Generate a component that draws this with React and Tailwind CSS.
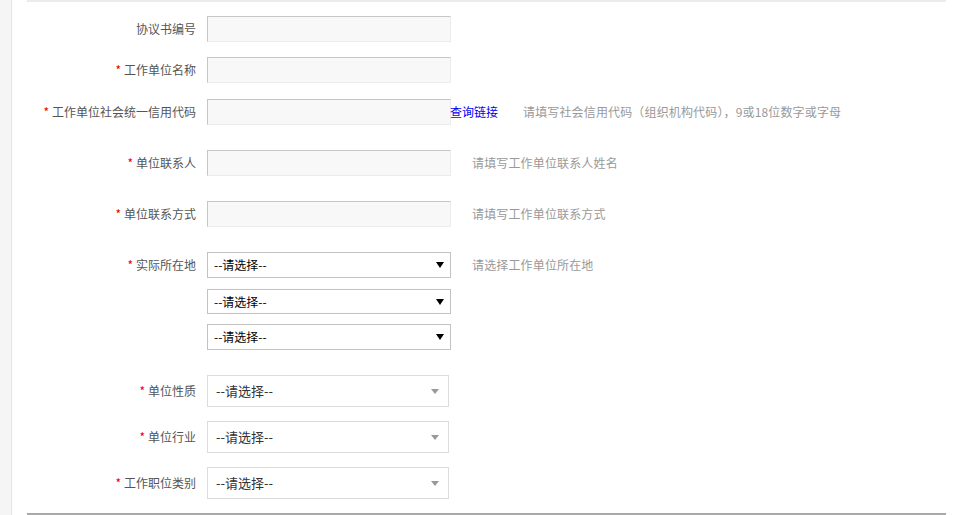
import React from "react";

const font = {
  fontFamily: '"Noto Sans CJK SC", "Noto Sans", sans-serif',
};

const Label = ({ text, required }) => (
  <div className="w-[169px] shrink-0 text-right text-[12px] text-[#555] leading-none">
    {required && <span className="text-[#e00] text-[12px] mr-[3px]">*</span>}
    {text}
  </div>
);

const TextBox = () => (
  <div className="w-[244px] h-[26px] shrink-0 bg-[#f8f8f8] border border-t-[#c6c6c6] border-l-[#c6c6c6] border-b-[#ebebeb] border-r-[#ebebeb]" />
);

// old-style native select with a black arrow
const NativeSelect = ({ h = "h-[26px]" }) => (
  <div className={`w-[244px] ${h} shrink-0 bg-white border border-[#c2c2c2] flex items-center justify-between pl-[6px] pr-[6px] text-[12px] text-black`}>
    <span>--请选择--</span>
    <span className="w-0 h-0 border-l-[4px] border-r-[4px] border-t-[6px] border-l-transparent border-r-transparent border-t-black" />
  </div>
);

// newer styled select with a grey arrow
const SoftSelect = () => (
  <div className="w-[242px] h-[32px] shrink-0 bg-white border border-[#dcdcdc] flex items-center justify-between pl-[8px] pr-[9px] text-[13px] text-[#333]">
    <span>--请选择--</span>
    <span className="w-0 h-0 border-l-[4px] border-r-[4px] border-t-[5px] border-l-transparent border-r-transparent border-t-[#999]" />
  </div>
);

const Hint = ({ children, className = "ml-[21px]" }) => (
  <span className={`${className} text-[12px] text-[#999] tracking-[0.15px]`}>{children}</span>
);

const Row = ({ mt, children }) => (
  <div className={`flex items-center ${mt}`}>{children}</div>
);

export default function App() {
  return (
    <div className="flex h-[515px] w-[958px] bg-white overflow-hidden" style={font}>
      <div className="w-[12px] bg-[#f5f5f5] border-r border-[#e4e4e4] shrink-0" />
      <div className="flex-1 pl-[15px] pr-[12px] flex flex-col">
        <div className="h-[2px] bg-[#ebebeb]" />

        <Row mt="mt-[14px]">
          <Label text="协议书编号" />
          <div className="ml-[11px]"><TextBox /></div>
        </Row>

        <Row mt="mt-[15px]">
          <Label text="工作单位名称" required />
          <div className="ml-[11px]"><TextBox /></div>
        </Row>

        <Row mt="mt-[16px]">
          <Label text="工作单位社会统一信用代码" required />
          <div className="ml-[11px]"><TextBox /></div>
          <a className="ml-[-1px] text-[12px] text-[#0000ee]">查询链接</a>
          <Hint className="ml-[25px]">请填写社会信用代码（组织机构代码），9或18位数字或字母</Hint>
        </Row>

        <Row mt="mt-[25px]">
          <Label text="单位联系人" required />
          <div className="ml-[11px]"><TextBox /></div>
          <Hint>请填写工作单位联系人姓名</Hint>
        </Row>

        <Row mt="mt-[25px]">
          <Label text="单位联系方式" required />
          <div className="ml-[11px]"><TextBox /></div>
          <Hint>请填写工作单位联系方式</Hint>
        </Row>

        <Row mt="mt-[25px]">
          <Label text="实际所在地" required />
          <div className="ml-[11px]"><NativeSelect /></div>
          <Hint>请选择工作单位所在地</Hint>
        </Row>
        <div className="mt-[11px] ml-[180px]"><NativeSelect h="h-[25px]" /></div>
        <div className="mt-[10px] ml-[180px]"><NativeSelect /></div>

        <Row mt="mt-[25px]">
          <Label text="单位性质" required />
          <div className="ml-[11px]"><SoftSelect /></div>
        </Row>

        <Row mt="mt-[14px]">
          <Label text="单位行业" required />
          <div className="ml-[11px]"><SoftSelect /></div>
        </Row>

        <Row mt="mt-[14px]">
          <Label text="工作职位类别" required />
          <div className="ml-[11px]"><SoftSelect /></div>
        </Row>

        <div className="mt-[14px] h-[2px] bg-[#a9a9a9]" />
      </div>
    </div>
  );
}
